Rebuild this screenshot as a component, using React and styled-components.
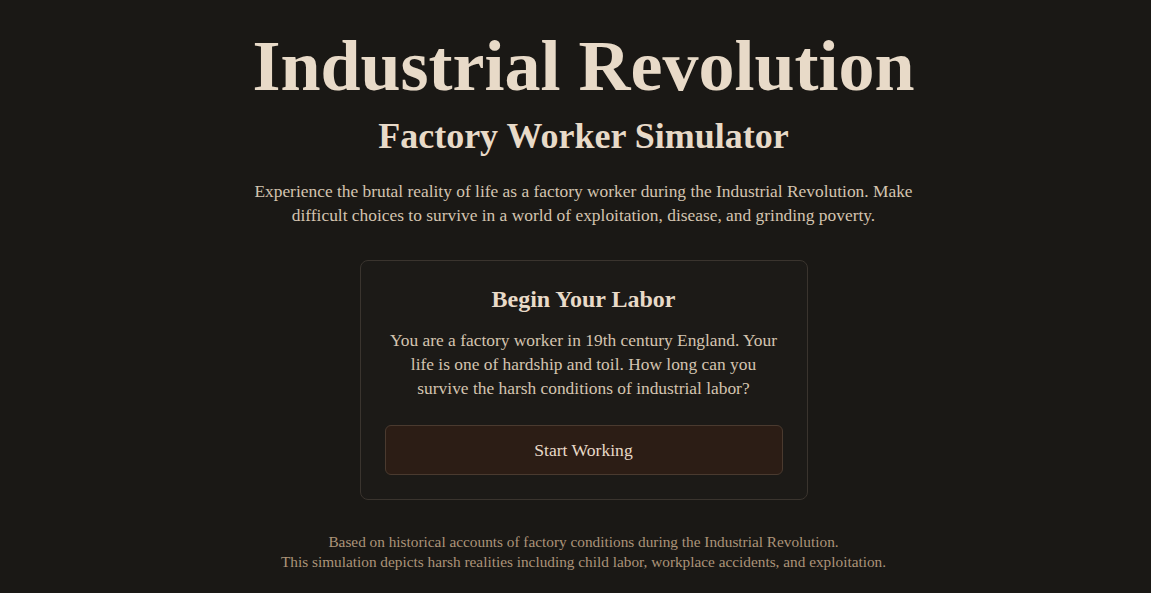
import React from 'react';
import styled, { createGlobalStyle } from 'styled-components';

const GlobalStyle = createGlobalStyle`
	html, body {
		margin: 0;
		padding: 0;
		background: #1a1815;
	}
	body {
		font-family: 'Liberation Serif', 'DejaVu Serif', serif;
		color: #e8dac8;
	}
`;

const Page = styled.main`
	min-height: 100vh;
	display: flex;
	flex-direction: column;
	align-items: center;
	padding: 30px 0 0 16px;
	box-sizing: border-box;
`;

const Title = styled.h1`
	margin: 0;
	font-size: 72px;
	line-height: 72px;
	font-weight: 700;
	color: #e8dac8;
	text-align: center;
`;

const Subtitle = styled.h2`
	margin: 16px 0 0;
	font-size: 36px;
	line-height: 36px;
	font-weight: 700;
	color: #e8dac8;
	text-align: center;
`;

const Intro = styled.p`
	margin: 25px 0 0;
	max-width: 672px;
	font-size: 17.4px;
	line-height: 24px;
	color: #d4c4b0;
	text-align: center;
`;

const Card = styled.section`
	margin-top: 33px;
	width: 448px;
	box-sizing: border-box;
	padding: 24px;
	border: 1px solid #3a342e;
	border-radius: 8px;
	background: #1c1a17;
	text-align: center;
`;

const CardTitle = styled.h3`
	margin: 0;
	font-size: 24px;
	line-height: 28px;
	font-weight: 700;
	color: #e8dac8;
`;

const CardText = styled.p`
	margin: 15px 0 0;
	font-size: 17.4px;
	line-height: 24px;
	color: #d4c4b0;
`;

const StartButton = styled.button`
	margin-top: 25px;
	width: 100%;
	height: 50px;
	border: 1px solid #4a3a2f;
	border-radius: 6px;
	background: #2c1d15;
	color: #e8dac8;
	font-family: inherit;
	font-size: 17.6px;
	cursor: pointer;
	&:hover {
		background: #36251b;
	}
`;

const Footer = styled.footer`
	margin-top: 32px;
	font-size: 15.3px;
	line-height: 20px;
	color: #ac9479;
	text-align: center;
`;

export default function App() {
	return (
		<>
			<GlobalStyle />
			<Page>
				<Title>Industrial Revolution</Title>
				<Subtitle>Factory Worker Simulator</Subtitle>
				<Intro>
					Experience the brutal reality of life as a factory worker during the
					Industrial Revolution. Make difficult choices to survive in a world of
					exploitation, disease, and grinding poverty.
				</Intro>
				<Card>
					<CardTitle>Begin Your Labor</CardTitle>
					<CardText>
						You are a factory worker in 19th century England. Your life is one of
						hardship and toil. How long can you survive the harsh conditions of
						industrial labor?
					</CardText>
					<StartButton>Start Working</StartButton>
				</Card>
				<Footer>
					<div>Based on historical accounts of factory conditions during the Industrial Revolution.</div>
					<div>This simulation depicts harsh realities including child labor, workplace accidents, and exploitation.</div>
				</Footer>
			</Page>
		</>
	);
}
